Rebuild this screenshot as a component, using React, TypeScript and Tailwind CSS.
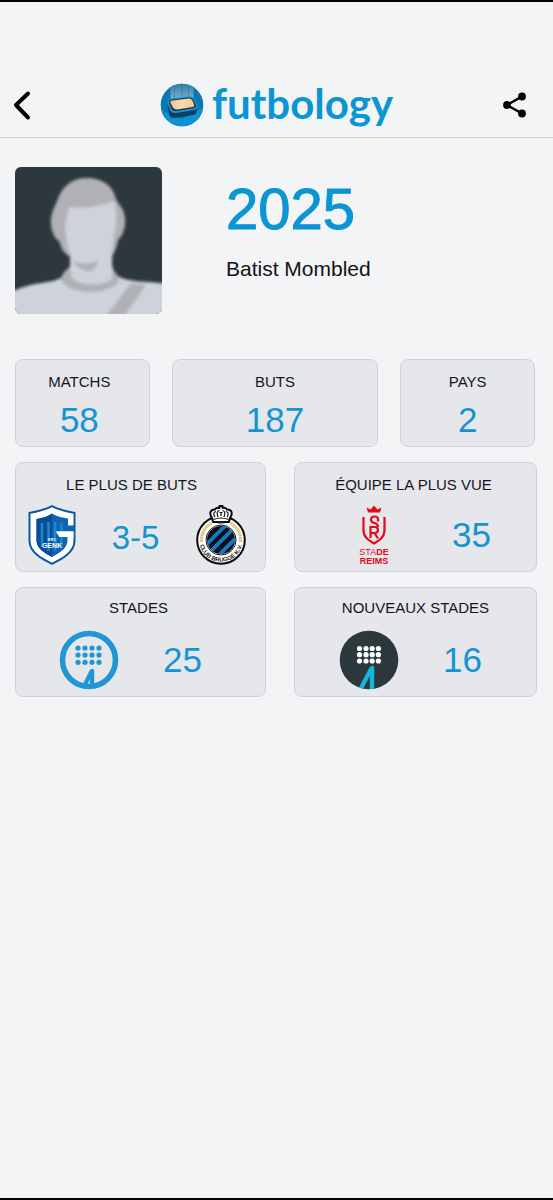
import type { ReactNode } from 'react';

function LogoMark() {
  return (
    <svg viewBox="0 0 44 44" className="size-11 shrink-0" aria-hidden="true">
      <defs>
        <linearGradient id="beam" x1="0" y1="0" x2="0" y2="1">
          <stop offset="0" stopColor="#2f7ba6" />
          <stop offset="1" stopColor="#7db4d2" />
        </linearGradient>
        <linearGradient id="pitch" x1="0" y1="0" x2="1" y2="0">
          <stop offset="0" stopColor="#f6bd86" />
          <stop offset="0.5" stopColor="#f8dcae" />
          <stop offset="1" stopColor="#f3c38c" />
        </linearGradient>
        <clipPath id="disc">
          <circle cx="22" cy="22" r="21.3" />
        </clipPath>
      </defs>
      <circle cx="22" cy="22" r="21.3" fill="#0877b2" />
      <g clipPath="url(#disc)">
        <path d="M0 27 L22 36 L44 24 V44 H0Z" fill="#0c92d2" />
        <path d="M10.500 0 H33.500 V17 H10.500Z" fill="url(#beam)" />
        <path d="M14.500 0 V17 M22 0 V17 M28.500 0 V17" stroke="#2a7cab" strokeWidth=".7" />
      </g>
      <path d="M7.500 22 L9 31 Q10 35.500 15 35 L33 32 Q37 31 37 27 V20Z" fill="#0b3f60" />
      <path d="M7.500 20 Q7 16 11 15.500 L29 13.300 Q33 13 34.500 16 L37.500 22 Q38.500 26 34.500 27 L16 30 Q11.500 30.500 10 27Z" fill="#1c91cd" />
      <path d="M9 19.500 Q8.500 17 12 16.500 L29 14.500 Q32 14.300 33.500 17 L35.700 21.500 Q36.700 24.700 33.500 25.300 L16.500 28 Q12.500 28.300 11.500 26Z" fill="#123a50" />
      <path d="M10.300 19.500 Q9.800 17.800 12.500 17.400 L29 15.600 Q31.300 15.400 32.300 17.500 L34 21 Q34.700 23.500 32.500 24 L17 26.400 Q13.700 26.700 12.800 24.300Z" fill="url(#pitch)" />
    </svg>
  );
}

function Avatar() {
  return (
    <svg viewBox="0 0 147 147" className="size-[147px] shrink-0 rounded-md" role="img" aria-label="Batist Mombled">
      <defs>
        <filter id="soften" x="-10%" y="-10%" width="120%" height="120%">
          <feGaussianBlur stdDeviation="1.8" />
        </filter>
      </defs>
      <rect width="147" height="147" fill="#2d383e" />
      <g filter="url(#soften)">
        <path d="M-10 129 C6 118 22 117 38 114 C49 111 54 106 55 98 V86 H97 V97 C98 107 103 111 114 113 C128 116 138 114 157 118 V160 H-10Z" fill="#ced2db" />
        <path d="M54 101 C49 104 47 108 46 112 C50 128 94 130 104 114 C103 109 101 106 98 103 C94 118 60 118 54 101Z" fill="#b0b1b5" />
        <path d="M116 116 L131 118 L104 157 H85Z" fill="#b0b1b5" />
        <path d="M54 89 C48 86 45 79 45 75 C40 72 37 66 36 58 C35 49 38 43 42 34 C47 19 57 11 72 11 C86 11 97 18 100 29 C102 38 109 39 110 51 C111 62 107 69 103 73 C102 80 99 87 96 90Z" fill="#b0b1b5" />
        <path d="M54 40 C68 42 83 40 99 34 C103 46 101 60 99 68 C98 79 97 90 97 96 L97 112 C87 120 63 119 56 110 V93 C52 75 48 61 52 50Z" fill="#ced2db" />
        <path d="M57 93 C64 98 75 97 84 94 C81 101 77 104 73 105 C67 102 60 100 57 93Z" fill="#b0b1b5" />
      </g>
    </svg>
  );
}

function GenkCrest() {
  return (
    <svg viewBox="0 0 48 60" className="h-[60px] w-12 shrink-0" role="img" aria-label="KRC Genk">
      <path d="M24 1.200 C31 5 39 6.500 46.500 8 V36 C46 48 34 54 24 58.800 C14 54 2 48 1.500 36 V8 C9 6.500 17 5 24 1.200Z" fill="#fff" stroke="#0b55a5" strokeWidth="2" />
      <path d="M24 8.500 C30 12 36 13 40 13.500 V20.500 H46.500 V26.500 H28 L31.500 32 H39.500 V36 C39 44 31 48 24 52 C17 48 9 44 8.500 36 V14 C14 13 19 12 24 8.500Z" fill="#0d64b4" />
      <path d="M24 8.500 C19 12 14 13 8.500 14 V36 C9 44 17 48 24 52Z" fill="#074d98" />
      <path d="M14 18 V42 M20.500 17 V46 M27 17 V46 M33.500 18 V26 M33.500 32 V42" stroke="#2284cb" strokeWidth="2.500" />
      <path d="M28 26.500 H45.500 V32 H31.500Z" fill="#fff" />
      <text x="24" y="35.500" textAnchor="middle" fontSize="4" fontWeight="700" fill="#fff" fontFamily="Liberation Sans, sans-serif">KRC</text>
      <text x="24" y="42.500" textAnchor="middle" fontSize="7" fontWeight="700" fill="#fff" fontFamily="Liberation Sans, sans-serif">GENK</text>
    </svg>
  );
}

function BruggeCrest() {
  return (
    <svg viewBox="0 0 52 60" className="h-[60px] w-[52px] shrink-0" role="img" aria-label="Club Brugge KV">
      <defs>
        <clipPath id="bruggeCore">
          <circle cx="26" cy="35" r="14" />
        </clipPath>
        <path id="bruggeArc" d="M4.200 35 A21.800 21.800 0 0 0 47.800 35" />
      </defs>
      <circle cx="26" cy="35" r="23.800" fill="#fff" stroke="#090909" strokeWidth="2" />
      <path d="M6.500 37 A19.500 19.500 0 0 1 16.500 18 M45.500 37 A19.500 19.500 0 0 0 35.500 18" fill="none" stroke="#dfc887" strokeWidth="3.200" strokeDasharray="2.500 .4" />
      <circle cx="26" cy="35" r="15" fill="#fff" stroke="#111" strokeWidth="1" />
      <g clipPath="url(#bruggeCore)">
        <rect x="10" y="20" width="32" height="32" fill="#090f15" />
        <path d="M5 46 L37 14 M11 51 L43 19 M18 56 L49 25" stroke="#1777c0" strokeWidth="3.900" />
      </g>
      <path d="M17 13 C13.500 8 16 4 20 4.500 C21 3 23 2.500 24.500 3 V1 H27.500 V3 C29 2.500 31 3 32 4.500 C36 4 38.500 8 35 13 L34 17 H18Z" fill="#fff" stroke="#090909" strokeWidth="2" strokeLinejoin="round" />
      <path d="M20 12 C18 9 18.500 7 21 6.500 M32 12 C34 9 33.500 7 31 6.500 M23 12 C21.500 8 22 6 24.500 5.500 M29 12 C30.500 8 30 6 27.500 5.500 M24.500 7.500 H27.500 M26 7 V11 M18.500 14.500 Q26 11.500 33.500 14.500" fill="none" stroke="#111" strokeWidth="1.200" />
      <text x="26" y="19" textAnchor="middle" fontSize="3" fontWeight="700" fill="#333" fontFamily="Liberation Sans, sans-serif">1891</text>
      <text fontSize="6" fontWeight="700" fill="#151515" fontFamily="Liberation Sans, sans-serif">
        <textPath href="#bruggeArc" startOffset="50%" textAnchor="middle">CLUB BRUGGE K.V.</textPath>
      </text>
    </svg>
  );
}

function ReimsCrest() {
  return (
    <svg viewBox="0 0 60 60" className="size-[60px] shrink-0" role="img" aria-label="Stade de Reims">
      <path d="M24 7.500 L22.500 2.500 L26.500 4.500 L30 .5 L33.500 4.500 L37.500 2.500 L36 7.500Z" fill="#e20b1b" />
      <path d="M19.500 12 V25 C19.500 32 24 35 30 38.500 C36 35 40.500 32 40.500 25 V12" fill="none" stroke="#e20b1b" strokeWidth="2.200" />
      <path d="M34 16.500 V14 Q34 11.500 30.500 11.500 Q27 11.500 27 14.500 Q27 17.500 30.500 18 Q34 19 34 22 M26.500 33 V22 H30.500 Q34 22 34 25 Q34 28 30.500 28 H27 M30.500 28 L34 33.500" fill="none" stroke="#e20b1b" strokeWidth="2.200" />
      <text x="30" y="50" textAnchor="middle" fontSize="9" fill="#e20b1b" fontFamily="Liberation Sans, sans-serif">
        STA<tspan fontWeight="700">DE</tspan>
      </text>
      <text x="30" y="59" textAnchor="middle" fontSize="9" fontWeight="700" fill="#e20b1b" fontFamily="Liberation Sans, sans-serif">REIMS</text>
    </svg>
  );
}

function StadiumIcon({ dark = false }: { dark?: boolean }) {
  const clip = dark ? 'stadiumDark' : 'stadiumLight';
  const xs = dark ? [20.5, 27, 33.2, 39.4] : [19, 26, 33, 40];
  const ys = dark ? [18.5, 24.7, 31] : [18, 25, 32.3];
  return (
    <svg viewBox="0 0 60 60" className="size-[60px] shrink-0" aria-hidden="true">
      <defs>
        <clipPath id={clip}>
          <circle cx="30" cy="30" r="29.3" />
        </clipPath>
      </defs>
      {dark ? (
        <circle cx="30" cy="30" r="29.3" fill="#2d383e" />
      ) : (
        <circle cx="30" cy="30" r="26.500" fill="none" stroke="#2196d5" strokeWidth="5.600" />
      )}
      {ys.map((y) =>
        xs.map((x) => <circle key={`${x}-${y}`} cx={x} cy={y} r="2.600" fill={dark ? '#fff' : '#2196d5'} />),
      )}
      <g clipPath={`url(#${clip})`}>
        {dark ? (
          <path d="M17 63 L30.500 37.500 Q32 35.500 34 35.700 Q35.200 36 35.200 38 V62 H30.800 V46 L22.500 62Z" fill="#12b8d6" />
        ) : (
          <path d="M22 58 L30.500 40.500 Q32 38.500 34 38.700 Q35.200 39 35.200 41 V57 H30.800 V49 L27.500 57Z" fill="#2196d5" />
        )}
      </g>
    </svg>
  );
}

function StatCard({ label, children, className }: { label: string; children: ReactNode; className: string }) {
  return (
    <section className={`rounded-lg border border-[#cfd1de] bg-[#e5e7eb] text-center ${className}`}>
      <h2 className="text-[15px] leading-5 text-[#15161c]">{label}</h2>
      {children}
    </section>
  );
}

function Figure({ children, size = 'text-[35px]' }: { children: ReactNode; size?: string }) {
  return <p className={`leading-10 text-[#1594d2] ${size}`}>{children}</p>;
}

export default function App() {
  return (
    <div className="flex min-h-screen flex-col border-y-2 border-black bg-[#f2f4f6] font-['Liberation_Sans',Arial,sans-serif]">
      <header className="flex items-center justify-between border-b border-[#cfd2d7] px-2 pt-[78px] pb-[7px]">
        <button type="button" aria-label="Retour" className="flex h-10 w-12 items-center">
          <svg viewBox="0 0 28 32" className="h-8 w-7" fill="none" stroke="#050505" strokeWidth="4" strokeLinecap="round" strokeLinejoin="round">
            <path d="M20 4.500 L8 16 L20 28.500" />
          </svg>
        </button>
        <div className="flex h-[50px] items-center gap-2">
          <LogoMark />
          <h1 className="pb-1 font-['Lato',sans-serif] text-[42px] leading-[50px] font-bold text-[#0b95d3]">futbology</h1>
        </div>
        <button type="button" aria-label="Partager" className="flex h-10 w-12 items-center pl-1">
          <svg viewBox="0 0 28 28" className="size-7" fill="#050505">
            <path d="M21 5.500 L6 14 L21 22.500" fill="none" stroke="#050505" strokeWidth="2.500" />
            <circle cx="21" cy="5.500" r="3.900" />
            <circle cx="6" cy="14" r="3.900" />
            <circle cx="21" cy="22.500" r="3.900" />
          </svg>
        </button>
      </header>

      <main className="pt-[29px] pr-4 pl-[15px]">
        <div className="flex gap-16">
          <Avatar />
          <div className="pt-3">
            <p className="text-[58px] leading-[60px] text-[#0b95d3] [-webkit-text-stroke:1px_#0b95d3]">2025</p>
            <p className="pt-4 text-[21px] leading-7 text-[#111217]">Batist Mombled</p>
          </div>
        </div>

        <div className="mt-[45px] grid grid-cols-[135fr_207fr_135fr] gap-[22px] pr-0.5">
          <StatCard label="MATCHS" className="pt-3 pr-1.5 pb-1.5">
            <div className="pt-2">
              <Figure>58</Figure>
            </div>
          </StatCard>
          <StatCard label="BUTS" className="pt-3 pb-1.5">
            <div className="pt-2">
              <Figure>187</Figure>
            </div>
          </StatCard>
          <StatCard label="PAYS" className="pt-3 pb-1.5">
            <div className="pt-2">
              <Figure>2</Figure>
            </div>
          </StatCard>
        </div>

        <div className="mt-[15px] grid grid-cols-[251fr_243fr] gap-x-7 gap-y-[15px]">
          <StatCard label="LE PLUS DE BUTS" className="pt-3 pr-[18px] pb-1.5">
            <div className="flex items-center justify-between pt-2.5 pl-3">
              <GenkCrest />
              <div className="pt-1.5">
                <Figure size="text-[33px]">3-5</Figure>
              </div>
              <BruggeCrest />
            </div>
          </StatCard>
          <StatCard label="ÉQUIPE LA PLUS VUE" className="pt-3 pr-1 pb-1.5">
            <div className="flex items-center justify-center gap-12 pt-2.5 pl-2">
              <ReimsCrest />
              <Figure>35</Figure>
            </div>
          </StatCard>
          <StatCard label="STADES" className="pt-2.5 pr-1 pb-1.5">
            <div className="flex items-center justify-center gap-11 pt-3 pr-4">
              <StadiumIcon />
              <Figure>25</Figure>
            </div>
          </StatCard>
          <StatCard label="NOUVEAUX STADES" className="pt-2.5 pb-1.5">
            <div className="flex items-center justify-center gap-11 pt-3 pr-2.5">
              <StadiumIcon dark />
              <Figure>16</Figure>
            </div>
          </StatCard>
        </div>
      </main>
    </div>
  );
}
